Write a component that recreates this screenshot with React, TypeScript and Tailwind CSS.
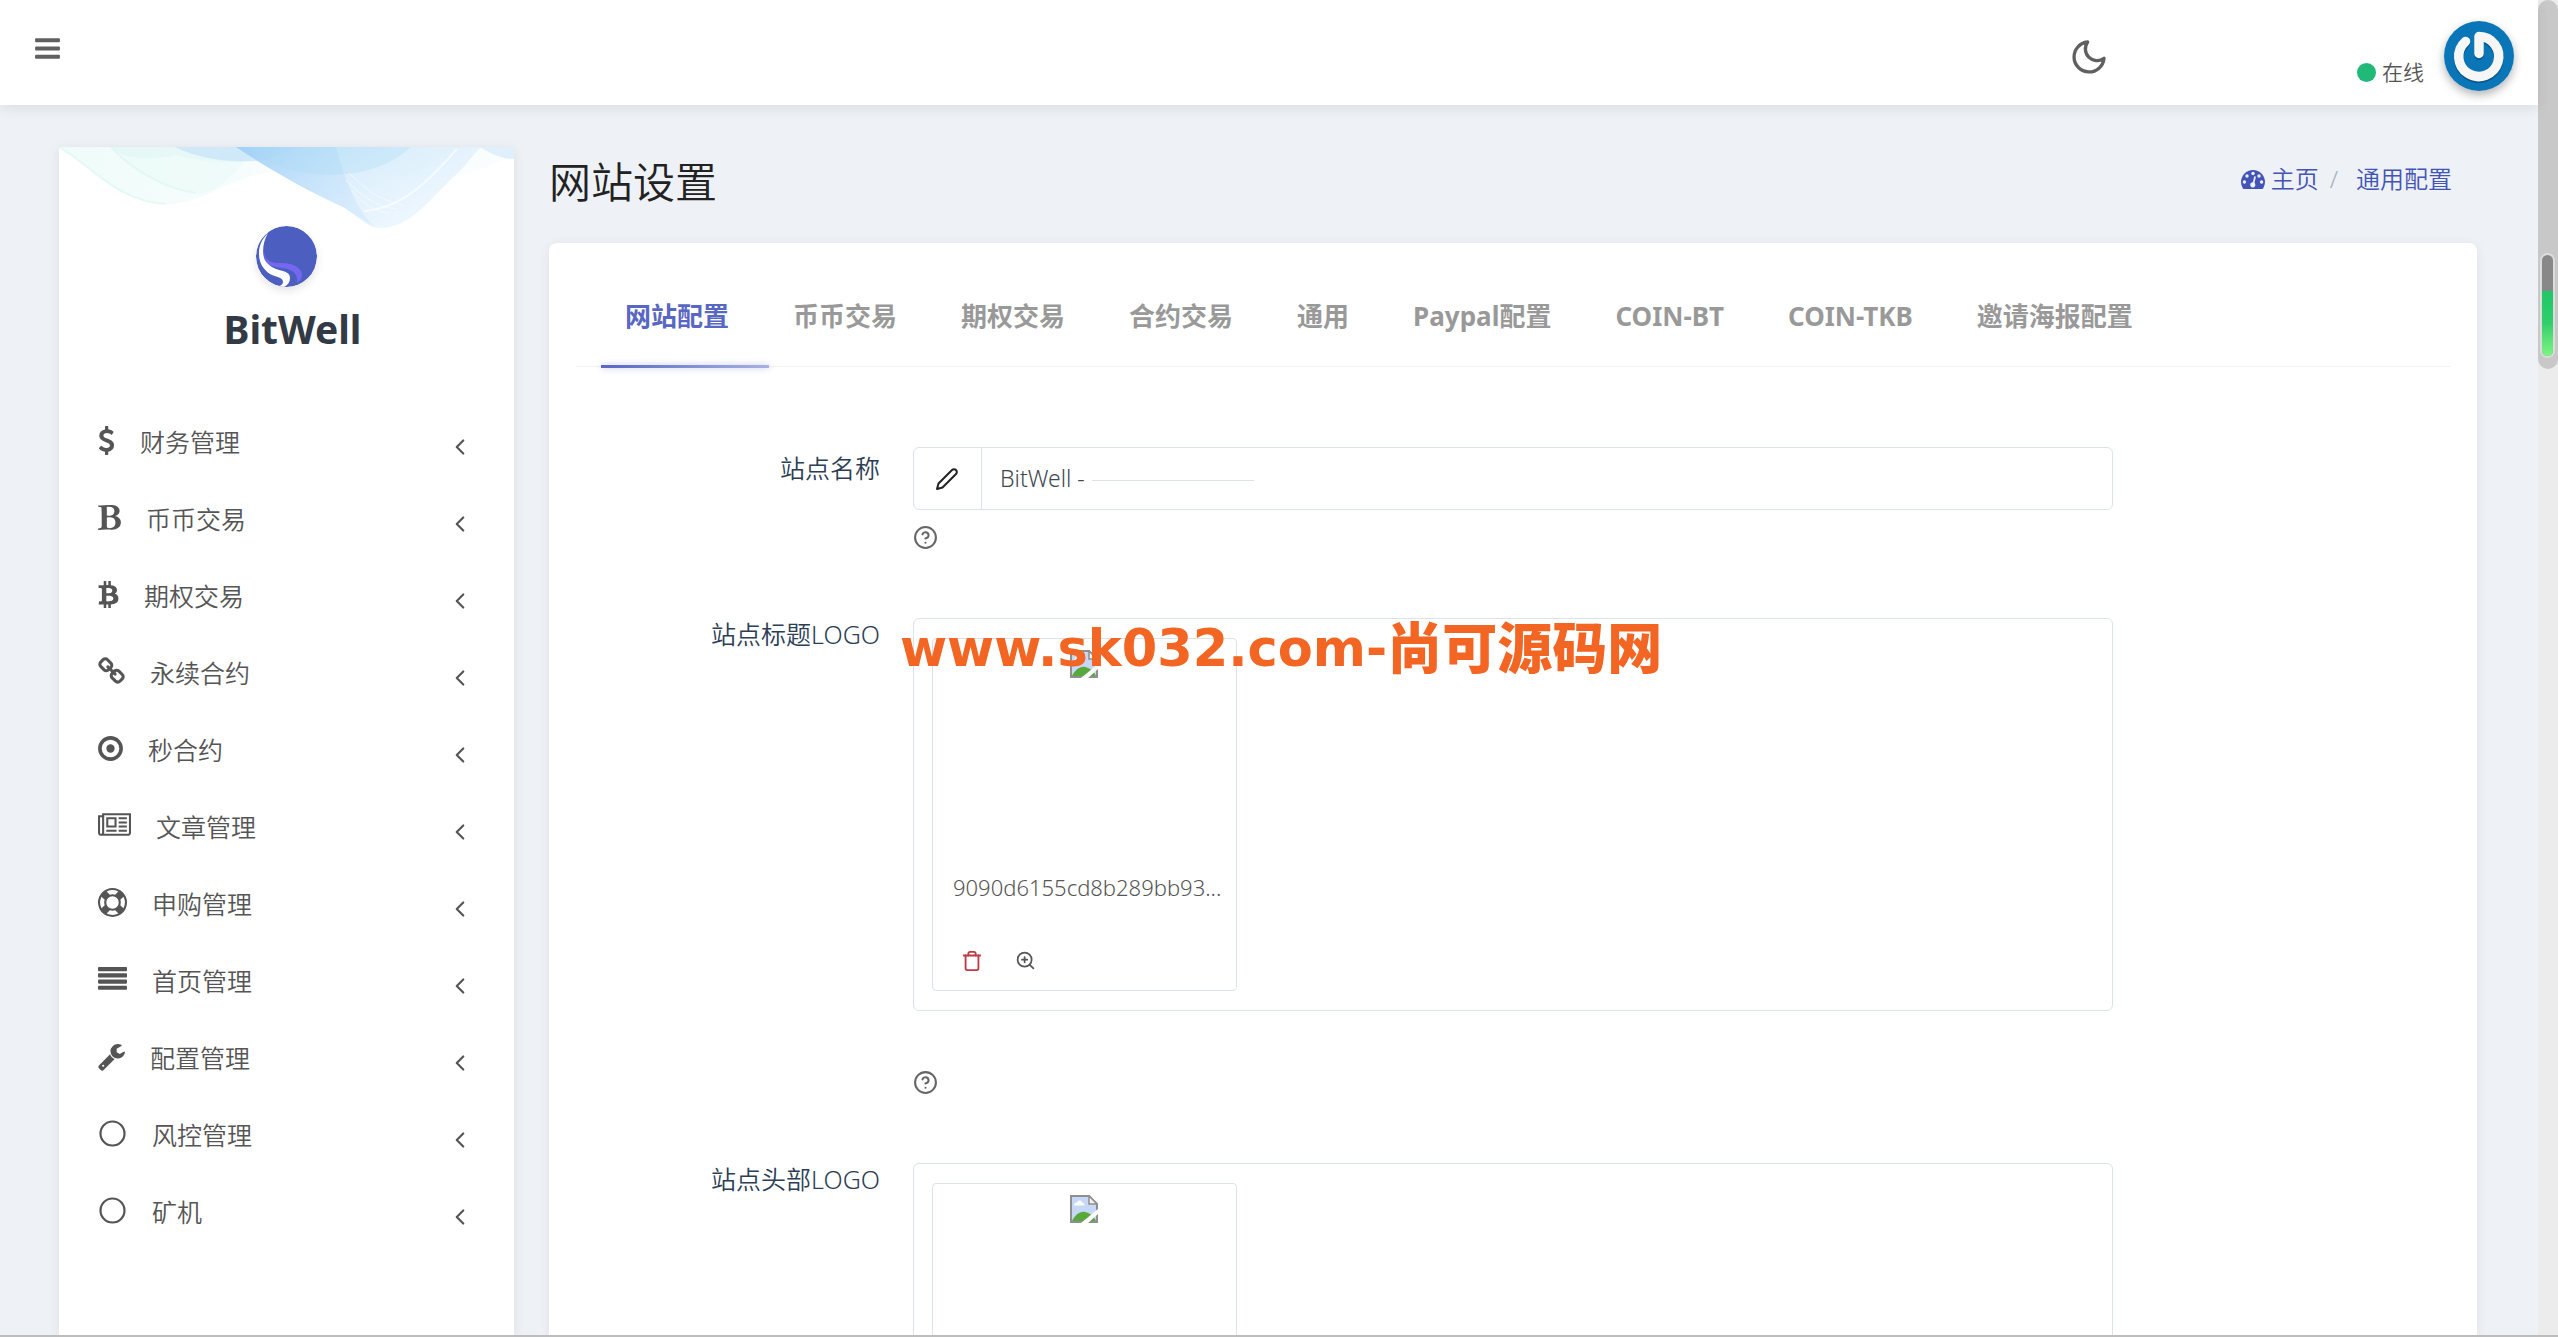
import { useState } from 'react';
import { FaBtc } from 'react-icons/fa';
import { FiChevronLeft, FiEdit2, FiHelpCircle, FiMoon, FiTrash, FiZoomIn } from 'react-icons/fi';

function App() {
  return (
    <div className="flex h-screen w-full overflow-hidden border-b-2 border-[#bdbdbd] bg-[#eef1f6] font-['Noto_Sans','Noto_Sans_CJK_SC',sans-serif] font-[350] text-[#555]">
      <div className="flex min-w-0 flex-1 flex-col">
        <Header />
        <div className="flex min-h-0 flex-1 gap-[35px] pl-[59px] pr-[61px] pt-[42px]">
          <Sidebar />
          <Content />
        </div>
      </div>
      <ScrollTrack />
    </div>
  );
}

function Header() {
  return (
    <header className="relative z-10 flex h-[105px] shrink-0 items-start bg-white pl-[35px] pr-6 shadow-[0_4px_12px_rgba(0,0,0,0.08)]">
      <button className="mt-[34px]" aria-label="菜单">
        <svg viewBox="128 0 1536 1792" className="h-[29px] w-[25px]" fill="#606060">
          <rect x="128" y="256" width="1536" height="256" rx="64" />
          <rect x="128" y="768" width="1536" height="256" rx="64" />
          <rect x="128" y="1280" width="1536" height="256" rx="64" />
        </svg>
      </button>
      <button className="ml-auto mt-[37px]" aria-label="夜间模式">
        <FiMoon size={40} strokeWidth={2} className="text-[#606060]" />
      </button>
      <div className="ml-[248px] mt-[56px] flex h-8 items-center gap-[6px]">
        <span className="h-[19px] w-[19px] rounded-full bg-[#21b978]" />
        <span className="text-[21px] leading-8">在线</span>
      </div>
      <a href="#profile" aria-label="账户" className="ml-5 mt-[21px] rounded-full shadow-[0_4px_10px_rgba(0,0,0,0.3)]">
        <Avatar />
      </a>
    </header>
  );
}

function Avatar() {
  return (
    <svg viewBox="0 0 70 70" className="h-[70px] w-[70px]">
      <circle cx="35" cy="35" r="35" fill="#0a76b8" />
      <g fill="none" strokeLinecap="round" strokeLinejoin="round">
        <path d="M35 33V16A20 20 0 1 1 21.5 21" stroke="#07598c" strokeWidth="10" transform="translate(0 1)" />
        <path d="M35 32.5V15.5A20 20 0 1 1 21.5 20.5" stroke="#f6f6f4" strokeWidth="9.5" />
      </g>
    </svg>
  );
}

const menu = [
  { label: '财务管理', icon: <DollarIcon /> },
  { label: '币币交易', icon: <BoldIcon /> },
  { label: '期权交易', icon: <FaBtc size={27} className="-mx-[3px]" /> },
  { label: '永续合约', icon: <ChainIcon /> },
  { label: '秒合约', icon: <DotCircleIcon /> },
  { label: '文章管理', icon: <NewspaperIcon /> },
  { label: '申购管理', icon: <LifeRingIcon /> },
  { label: '首页管理', icon: <JustifyIcon /> },
  { label: '配置管理', icon: <WrenchIcon /> },
  { label: '风控管理', icon: <CircleIcon /> },
  { label: '矿机', icon: <CircleIcon /> },
];

function Sidebar() {
  return (
    <aside className="w-[455px] shrink-0 bg-white shadow-[0_2px_12px_rgba(0,0,0,0.08)]">
      <div className="relative flex flex-col items-center pt-[79px]">
        <Wave />
        <svg viewBox="0 0 61 61" className="relative h-[61px] w-[61px] rounded-full shadow-[0_4px_8px_rgba(0,0,0,0.1)]">
          <circle cx="30.5" cy="30.5" r="30.5" fill="#4c5fc1" />
          <path d="M8 26C9 32 12 35 17 36.5C22 37.5 28 36.5 34 38C41 40 46 44 46 49C46 52 44 55 41 57C42 52 40 47 35 44.5C29 41.5 22 42 16 40C10 38 8 33 8 26Z" fill="#7467f0" />
          <path d="M12 7C6 13 2.5 20 3 29C3.5 38 8 44 14 48C19 51 27 51 27 56C27 58 25 60 22 60L28 61C32 59 34 56 34 52C34 47 30 46 25 44.5C18 42.5 13 40 9.500 35C6 30 6 17 12 7Z" fill="#fff" />
        </svg>
        <h2 className="mt-4 pl-3 text-[39px] font-bold leading-[52px] text-[#323a46]">BitWell</h2>
      </div>
      <nav className="mt-12">
        {menu.map((item) => (
          <a key={item.label} href="#menu" className="flex h-[77px] items-center pl-[39px] pr-[41px]">
            <span className="mb-0.5">{item.icon}</span>
            <span className="ml-[25px] text-[25px] leading-[36px]">{item.label}</span>
            <FiChevronLeft size={26} className="ml-auto mt-[11px]" />
          </a>
        ))}
      </nav>
    </aside>
  );
}

function Wave() {
  return (
    <svg viewBox="0 0 455 81" className="absolute left-0 top-0 w-full">
      <defs>
        <linearGradient id="mint" x1="0" x2="1">
          <stop offset="0" stopColor="#e0f9f3" />
          <stop offset="0.5" stopColor="#f0fcfb" />
          <stop offset="1" stopColor="#f4fcff" />
        </linearGradient>
        <linearGradient id="sky" x1="0" x2="1" y1="0" y2="0.6">
          <stop offset="0" stopColor="#aad6f8" />
          <stop offset="0.45" stopColor="#d0e9fb" />
          <stop offset="1" stopColor="#ebf6fe" />
        </linearGradient>
        <linearGradient id="fold" x1="0" x2="1" y1="0" y2="0.3">
          <stop offset="0" stopColor="#8cc4f5" />
          <stop offset="1" stopColor="#c8e4fb" />
        </linearGradient>
      </defs>
      <path d="M0 0C34 20 60 56 108 57C145 57 165 32 212 25C280 22 340 32 387 30C415 28 440 14 455 8V0Z" fill="url(#mint)" opacity="0.5" />
      <path d="M52 0C72 22 110 44 140 46C160 46 185 20 191 0Z" fill="#e8faf7" opacity="0.5" />
      <path d="M52 0C65 12 85 14 116 8C140 14 170 17 191 14L200 0Z" fill="#d9f4f4" opacity="0.4" />
      <path d="M116 0C140 12 175 17 207 13L240 0Z" fill="#bfe0f9" opacity="0.6" />
      <path d="M177 0C210 22 245 42 284 60C300 70 308 81 322 81C352 81 372 50 402 23C410 14 415 6 423 0Z" fill="url(#sky)" opacity="0.75" />
      <path d="M177 0C210 22 245 42 284 60L316 80C300 66 288 40 277 0Z" fill="url(#fold)" opacity="0.45" />
      <path d="M207 13C240 32 310 38 352 0H190Z" fill="#a9daf4" opacity="0.3" />
      <path d="M421 0C435 9 445 12 455 12V0Z" fill="#dff0fb" />
      <path d="M305 64C345 62 375 28 398 2" fill="none" stroke="#fff" strokeWidth="2" opacity="0.6" />
      <path d="M287 33C305 52 320 60 338 62M290 26C312 48 326 54 344 58M293 44C306 58 316 64 330 66" fill="none" stroke="#fff" strokeWidth="1" opacity="0.5" />
      <path d="M0 0C34 20 60 56 108 57M52 0C72 22 105 42 137 46" fill="none" stroke="#cdf3e8" strokeWidth="2" opacity="0.4" />
    </svg>
  );
}

const tabs = ['网站配置', '币币交易', '期权交易', '合约交易', '通用', 'Paypal配置', 'COIN-BT', 'COIN-TKB', '邀请海报配置'];

function Content() {
  const [active, setActive] = useState(0);

  return (
    <main className="flex min-w-0 flex-1 flex-col">
      <div className="flex h-24 shrink-0 items-start justify-between pr-[25px]">
        <h1 className="mt-[5px] text-[42px] leading-[60px] text-[#222]">网站设置</h1>
        <div className="mt-[14px] flex items-center text-[24px] leading-[36px] text-[#4254b8]">
          <a href="#home" className="flex items-center gap-[6px]">
            <DashboardIcon />
            主页
          </a>
          <span className="ml-[11px] mr-[18px] font-light text-[#a9aebb]">/</span>
          <a href="#settings">通用配置</a>
        </div>
      </div>

      <section className="min-h-0 flex-1 rounded-t-lg bg-white shadow-[0_2px_12px_rgba(0,0,0,0.07)]">
        <div className="mx-[27px] flex border-b border-[#f1f1f1] pl-[25px] pt-10">
          {tabs.map((tab, index) => (
            <button
              key={tab}
              onClick={() => setActive(index)}
              className={`relative h-[83px] whitespace-nowrap pb-[18px] pl-6 pr-10 text-[26px] font-bold leading-[36px] ${
                index === active ? 'text-[#5867c3]' : 'text-[#999]'
              }`}
            >
              {tab}
              {index === active && (
                <span className="absolute -bottom-0.5 left-0 h-[3px] w-full bg-gradient-to-r from-[#5867c3] to-[#a9b1e1] shadow-[0_0_6px_rgba(88,103,195,0.4)]" />
              )}
            </button>
          ))}
        </div>

        <form className="flex flex-col gap-[68px] px-10 pt-20">
          <Field label="站点名称" id="site-name" labelClass="pt-[5px]">
            <div className="relative flex h-[63px] rounded-md border border-[#dbe3e6]">
              <span className="flex w-[68px] items-center justify-center border-r border-[#dbe3e6]">
                <FiEdit2 size={24} strokeWidth={2} className="text-[#222]" />
              </span>
              <input
                id="site-name"
                defaultValue="BitWell -"
                className="min-w-0 flex-1 rounded-r-md bg-transparent px-[18px] text-[23px] font-light text-[#414750] outline-none"
              />
              <span className="absolute left-[178px] top-8 h-px w-[162px] bg-[#dbe3e6]" />
            </div>
            <Help className="mt-[15px]" />
          </Field>
          <Field label="站点标题LOGO" id="site-title-logo">
            <Upload id="site-title-logo" fileName="9090d6155cd8b289bb93..." />
            <Help className="mt-[59px]" />
          </Field>
          <Field label="站点头部LOGO" id="site-header-logo">
            <Upload id="site-header-logo" />
            <Help className="mt-[59px]" />
          </Field>
        </form>
      </section>

      <div className="pointer-events-none absolute left-[900px] top-[617px] z-20 flex items-center whitespace-nowrap font-['DejaVu_Sans','Noto_Sans_CJK_SC',sans-serif] font-bold leading-[64px] text-[#f26522]">
        <span className="text-[51px]">www.sk032.com-</span>
        <span className="text-[55px] font-black">尚可源码网</span>
      </div>
    </main>
  );
}

function Field({ label, id, labelClass = '', children }: { label: string; id: string; labelClass?: string; children: any }) {
  return (
    <div className="flex">
      <label htmlFor={id} className={`w-1/6 pr-[17px] text-right text-[25px] leading-8 text-[#2c3e55] ${labelClass}`}>
        {label}
      </label>
      <div className="w-2/3 px-4">{children}</div>
    </div>
  );
}

function Help({ className }: { className: string }) {
  return (
    <div className={className}>
      <FiHelpCircle size={25} strokeWidth={2} className="text-[#666]" />
    </div>
  );
}

function Upload({ id, fileName }: { id: string; fileName?: string }) {
  return (
    <div className="rounded-md border border-[#dbe3e6] py-[19px] pl-[18px]">
      <input id={id} type="file" className="sr-only" />
      <div className="w-[305px] rounded border border-[#dbe3e6] px-5 pt-[11px]">
        <div className="flex h-[221px] justify-center">
          <BrokenImage />
        </div>
        <p className="h-8 whitespace-nowrap text-[22px] font-light leading-8">{fileName}</p>
        <div className="flex h-[87px] items-start gap-8 pl-2 pt-[47px]">
          <button type="button" aria-label="删除">
            <FiTrash size={22} strokeWidth={2} className="text-[#bd3b45]" />
          </button>
          <button type="button" aria-label="预览">
            <FiZoomIn size={21} strokeWidth={2} />
          </button>
        </div>
      </div>
    </div>
  );
}

function BrokenImage() {
  return (
    <svg viewBox="0 0 28 28" className="h-7 w-7">
      <path d="M1 1H19L27 9V27H1Z" fill="#c6d8f5" stroke="#8f8f8f" strokeWidth="2" />
      <path d="M4 10.5C4 8 6 7.5 7 7.5C8 4.500 12 5 12 7.5C14 7.5 14.5 9 14.5 10.5Z" fill="#fff" />
      <path d="M2 26C5 20 10 16 15 17C20 18 24 21 26 26Z" fill="#56a93a" />
      <path d="M19 1V9H27Z" fill="#f3f3f3" stroke="#8f8f8f" strokeWidth="1.5" />
      <path d="M11 28L28 14V19L18 28Z" fill="#fff" />
    </svg>
  );
}

function ScrollTrack() {
  return (
    <div className="relative w-5 shrink-0 bg-[#ececec]">
      <div className="h-[369px] rounded-[10px] bg-[#c8c8c8]" />
      <div className="absolute left-0.5 top-[253px] flex h-[105px] w-[15px] flex-col overflow-hidden rounded-full border-2 border-[#dcdcdc] bg-[#888]">
        <span className="mt-auto h-[65px] bg-gradient-to-b from-[#20c668] via-[#2fcf6c] to-[#7df584]" />
      </div>
    </div>
  );
}

function DollarIcon() {
  return (
    <svg viewBox="0 0 1024 1792" className="h-[29px] w-[17px]" fill="currentColor">
      <path d="M978 1185q0 153-99.500 263.500t-258.500 136.500v175q0 14-9 23t-23 9h-135q-13 0-22.500-9.500t-9.500-22.500v-175q-66-9-127.500-31t-101.500-44.500-74-48-46.500-37.500-17.500-18q-17-21-2-41l103-135q7-10 23-12 15-2 24 9l2 2q113 99 243 125 37 8 74 8 81 0 142.500-43t61.500-122q0-28-15-53t-33.500-42-58.500-37.500-66-32-80-32.500q-39-16-61.500-25t-61.500-26.500-62.500-31-56.500-35.500-53.500-42.500-43.500-49-35.500-58-21-66.500-8.500-78q0-138 98-242t255-134v-180q0-13 9.500-22.500t22.500-9.500h135q14 0 23 9t9 23v176q57 6 110.500 23t87 33.500 63.500 37.500 39 29 15 14q17 18 5 38l-81 146q-8 15-23 16-14 3-27-7-3-3-14.500-12t-39-26.500-58.500-32-74.500-26-85.500-11.500q-95 0-155 43t-60 111q0 26 8.500 48t29.500 41.500 39.500 33 56 31 60.500 27 70 27.500q53 20 81 31.500t76 35 75.500 42.500 62 50 53 63.500 31.500 76.500 13 94z" />
    </svg>
  );
}

function BoldIcon() {
  return (
    <svg viewBox="192 0 1408 1792" className="h-[29px] w-[23px]" fill="currentColor">
      <path d="M747 1521q74 32 140 32 376 0 376-335 0-114-41-180-27-44-61.500-74t-67.500-46.500-80.500-25-84-10.500-94.500-2q-73 0-101 10 0 53-.5 159t-.5 158q0 8-1 67.500t-.5 96.500 4.500 83.500 12 66.500zm-14-746q42 7 109 7 82 0 143-13t110-44.500 74.500-89.500 25.500-142q0-70-29-122.500t-79-82-108-43.500-124-14q-50 0-130 13 0 50 4 151t4 152q0 27-.5 80t-.5 79q0 46 1 69zm-541 889l2-94q15-4 85-16t106-27q7-12 12.500-27t8.500-33.500 5.500-32.500 3-37.500.5-34v-65.500q0-982-22-1025-4-8-22-14.500t-44.500-11-49.500-7-48.500-4.500-30.500-3l-4-83q98-2 340-11.500t373-9.500q23 0 68 .5t68 .5q70 0 136.500 13t128.500 42 108 71 74 104.500 28 137.500q0 52-16.500 95.500t-39 72-64.500 57.500-73 45-84 40q154 35 256.500 134t102.500 248q0 100-35 179.500t-93.500 130.500-138 85.500-163.500 48.500-176 14q-44 0-132-3t-132-3q-106 0-307 11t-231 12z" />
    </svg>
  );
}

function ChainIcon() {
  return (
    <svg viewBox="64 0 1664 1792" className="h-[29px] w-[27px]" fill="currentColor">
      <path d="M1520 1216q0-40-28-68l-208-208q-28-28-68-28-42 0-72 32 3 3 19 18.500t21.500 21.500 15 19 13 25.500 3.500 27.500q0 40-28 68t-68 28q-15 0-27.500-3.500t-25.500-13-19-15-21.500-21.500-18.500-19q-33 31-33 73 0 40 28 68l206 207q27 27 68 27 40 0 68-26l147-146q28-28 28-67zm-703-705q0-40-28-68l-206-207q-28-28-68-28-39 0-68 27l-147 146q-28 28-28 67 0 40 28 68l208 208q27 27 68 27 42 0 72-31-3-3-19-18.500t-21.500-21.500-15-19-13-25.500-3.500-27.500q0-40 28-68t68-28q15 0 27.500 3.500t25.500 13 19 15 21.500 21.500 18.500 19q33-31 33-73zm895 705q0 120-85 203l-147 146q-83 83-203 83-121 0-204-85l-206-207q-83-83-83-203 0-123 88-209l-88-88q-86 88-208 88-120 0-204-84l-208-208q-84-84-84-204t85-203l147-146q83-83 203-83 121 0 204 85l206 207q83 83 83 203 0 123-88 209l88 88q86-88 208-88 120 0 204 84l208 208q84 84 84 204z" />
    </svg>
  );
}

function DotCircleIcon() {
  return (
    <svg viewBox="128 0 1536 1792" className="h-[29px] w-[25px]" fill="currentColor">
      <circle cx="896" cy="896" r="256" />
      <circle cx="896" cy="896" r="656" fill="none" stroke="currentColor" strokeWidth="224" />
    </svg>
  );
}

function NewspaperIcon() {
  return (
    <svg viewBox="0 0 2048 1792" className="h-[29px] w-[33px]" fill="currentColor">
      <path d="M1024 512h-384v384h384v-384zm128 640v128h-640v-128h640zm0-768v640h-640v-640h640zm640 768v128h-512v-128h512zm0-256v128h-512v-128h512zm0-256v128h-512v-128h512zm0-256v128h-512v-128h512zm-1536 960v-960h-128v960q0 26 19 45t45 19 45-19 19-45zm1664 0v-1088h-1536v1088q0 33-11 64h1483q26 0 45-19t19-45zm128-1216v1216q0 80-56 136t-136 56h-1664q-80 0-136-56t-56-136v-1088h256v-128h1792z" />
    </svg>
  );
}

function LifeRingIcon() {
  return (
    <svg viewBox="0 0 1792 1792" className="h-[29px] w-[29px]" fill="currentColor">
      <path d="M896 0q182 0 348 71t286 191 191 286 71 348-71 348-191 286-286 191-348 71-348-71-286-191-191-286-71-348 71-348 191-286 286-191 348-71zm0 128q-190 0-361 90l194 194q82-28 167-28t167 28l194-194q-171-90-361-90zm-678 1129l194-194q-28-82-28-167t28-167l-194-194q-90 171-90 361t90 361zm678 407q190 0 361-90l-194-194q-82 28-167 28t-167-28l-194 194q171 90 361 90zm0-384q159 0 271.500-112.500t112.500-271.500-112.500-271.500-271.500-112.500-271.500 112.500-112.500 271.500 112.500 271.500 271.500 112.500zm484-217l194 194q90-171 90-361t-90-361l-194 194q28 82 28 167t-28 167z" />
    </svg>
  );
}

function JustifyIcon() {
  return (
    <svg viewBox="0 0 1792 1792" className="h-[29px] w-[29px]" fill="currentColor">
      <rect y="128" width="1792" height="256" rx="64" />
      <rect y="512" width="1792" height="256" rx="64" />
      <rect y="896" width="1792" height="256" rx="64" />
      <rect y="1280" width="1792" height="256" rx="64" />
    </svg>
  );
}

function WrenchIcon() {
  return (
    <svg viewBox="64 0 1664 1792" className="h-[29px] w-[27px]" fill="currentColor">
      <path d="M448 1472q0-26-19-45t-45-19-45 19-19 45 19 45 45 19 45-19 19-45zm644-420l-682 682q-37 37-90 37-52 0-91-37l-106-108q-38-36-38-90 0-53 38-91l681-681q39 98 114.500 173.500t173.500 114.500zm634-435q0 39-23 106-47 134-164.500 217.500t-258.500 83.500q-185 0-316.500-131.500t-131.500-316.500 131.500-316.500 316.500-131.500q58 0 121.500 16.500t107.500 46.500q16 11 16 28t-16 28l-293 169v224l193 107q5-3 79-48.500t135.500-81 70.500-35.500q15 0 23.500 10t8.500 25z" />
    </svg>
  );
}

function CircleIcon() {
  return (
    <svg viewBox="0 0 29 29" className="h-[29px] w-[29px]" fill="none" stroke="currentColor" strokeWidth="2.2">
      <circle cx="14.5" cy="14.5" r="12" />
    </svg>
  );
}

function DashboardIcon() {
  return (
    <svg viewBox="0 128 1792 1408" className="h-[19px] w-[24px]">
      <path d="M1792 1024q0 261-141 483-19 29-54 29h-1402q-35 0-54-29-141-221-141-483 0-182 71-348t191-286 286-191 348-71 348 71 286 191 191 286 71 348z" fill="currentColor" />
      <g fill="#eef1f6">
        <circle cx="256" cy="1024" r="128" />
        <circle cx="448" cy="576" r="128" />
        <circle cx="896" cy="384" r="128" />
        <circle cx="1344" cy="576" r="128" />
        <circle cx="1536" cy="1024" r="128" />
        <circle cx="880" cy="1230" r="190" />
        <path d="M930 1120L1040 660" stroke="#eef1f6" strokeWidth="128" strokeLinecap="round" />
      </g>
    </svg>
  );
}

export default App;
